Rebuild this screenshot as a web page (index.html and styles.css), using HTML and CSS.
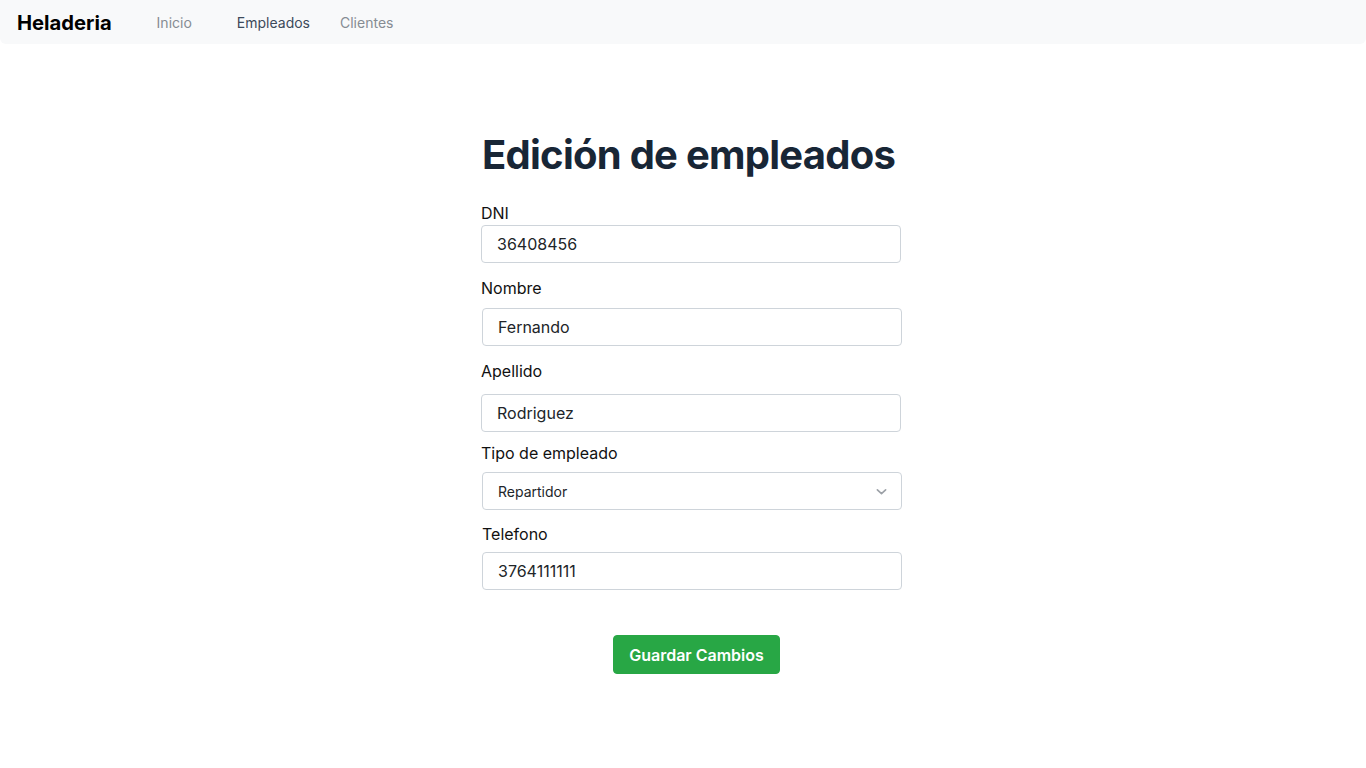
FILE: index.html
```html
<!DOCTYPE html>
<html lang="es">
<head>
<meta charset="utf-8">
<title>Heladeria</title>
<link rel="stylesheet" href="styles.css">
</head>
<body>
<nav class="navbar">
  <a class="brand" href="#">Heladeria</a>
  <a class="nav-link link-inicio" href="#">Inicio</a>
  <a class="nav-link link-empleados active" href="#">Empleados</a>
  <a class="nav-link link-clientes" href="#">Clientes</a>
</nav>
<main class="main">
  <div class="container">
    <h1 class="title">Edición de empleados</h1>
    <form class="form">
      <div class="field field-dni">
        <label class="label">DNI</label>
        <input class="input" type="text" value="36408456">
      </div>
      <div class="field field-nombre">
        <label class="label">Nombre</label>
        <input class="input shift" type="text" value="Fernando">
      </div>
      <div class="field field-apellido">
        <label class="label">Apellido</label>
        <input class="input" type="text" value="Rodriguez">
      </div>
      <div class="field field-tipo">
        <label class="label">Tipo de empleado</label>
        <div class="select shift">
          <span class="select-text">Repartidor</span>
          <svg class="chevron" width="11" height="11" viewBox="0 0 16 16"><path d="M2 5.5l6 5.5 6-5.5" fill="none" stroke="#9ca1a7" stroke-width="2.4" stroke-linecap="round" stroke-linejoin="round"/></svg>
        </div>
      </div>
      <div class="field field-tel">
        <label class="label">Telefono</label>
        <input class="input shift" type="text" value="3764111111">
      </div>
      <div class="actions">
        <button class="btn" type="button">Guardar Cambios</button>
      </div>
    </form>
  </div>
</main>
</body>
</html>
```

FILE: styles.css
```css
* { box-sizing: border-box; }
html, body {
  margin: 0;
  padding: 0;
  background: #fff;
  font-family: Inter, "Noto Sans", sans-serif;
  color: #212529;
}
.navbar {
  height: 44px;
  background: #f8f9fa;
  border-radius: 0 0 6px 6px;
  display: flex;
  align-items: center;
  padding-left: 17px;
}
.brand {
  font-size: 20.2px;
  font-weight: 700;
  color: #000;
  text-decoration: none;
}
.nav-link {
  font-size: 14px;
  color: #868c93;
  text-decoration: none;
}
.nav-link.active { color: #3d4a5b; }
.link-inicio { margin-left: 45px; }
.link-empleados { margin-left: 45px; }
.link-clientes { margin-left: 30px; }

.main {
  padding: 85px 0 0 16px;
  display: flex;
  justify-content: center;
}
.container { width: 420px; }
.title {
  margin: 0 0 21px 1px;
  font-size: 40px;
  line-height: 51px;
  font-weight: 700;
  letter-spacing: -0.75px;
  color: #182636;
  white-space: nowrap;
}
.form { display: flex; flex-direction: column; }
.label {
  display: block;
  font-size: 16px;
  line-height: 24px;
  color: #111;
}
.field-dni .label { margin-bottom: 0; }
.field-nombre { margin-top: 13px; }
.field-nombre .label { margin-bottom: 8px; }
.field-apellido { margin-top: 13px; }
.field-apellido .label { margin-bottom: 11px; }
.field-tipo { margin-top: 9px; }
.field-tipo .label { margin-bottom: 7px; }
.field-tel { margin-top: 12px; }
.field-tel .label { margin-bottom: 6px; margin-left: 1px; }

.input, .select {
  display: block;
  width: 420px;
  height: 38px;
  border: 1px solid #ced4da;
  border-radius: 4px;
  padding: 0 15px;
  font-family: Inter, "Noto Sans", sans-serif;
  font-size: 16px;
  color: #212529;
  background: #fff;
  outline: none;
}
.shift { margin-left: 1px; }
.select {
  display: flex;
  align-items: center;
  justify-content: space-between;
  padding-right: 14px;
}
.select-text { font-size: 14px; color: #212529; }
.chevron { display: block; }

.actions {
  display: flex;
  justify-content: center;
  margin-top: 45px;
  padding-left: 11px;
}
.btn {
  height: 39px;
  padding: 0 15px;
  border: 1px solid #28a745;
  border-radius: 4px;
  background: #28a745;
  color: #fff;
  font-family: Inter, "Noto Sans", sans-serif;
  font-size: 16px;
  font-weight: 600;
}
```
